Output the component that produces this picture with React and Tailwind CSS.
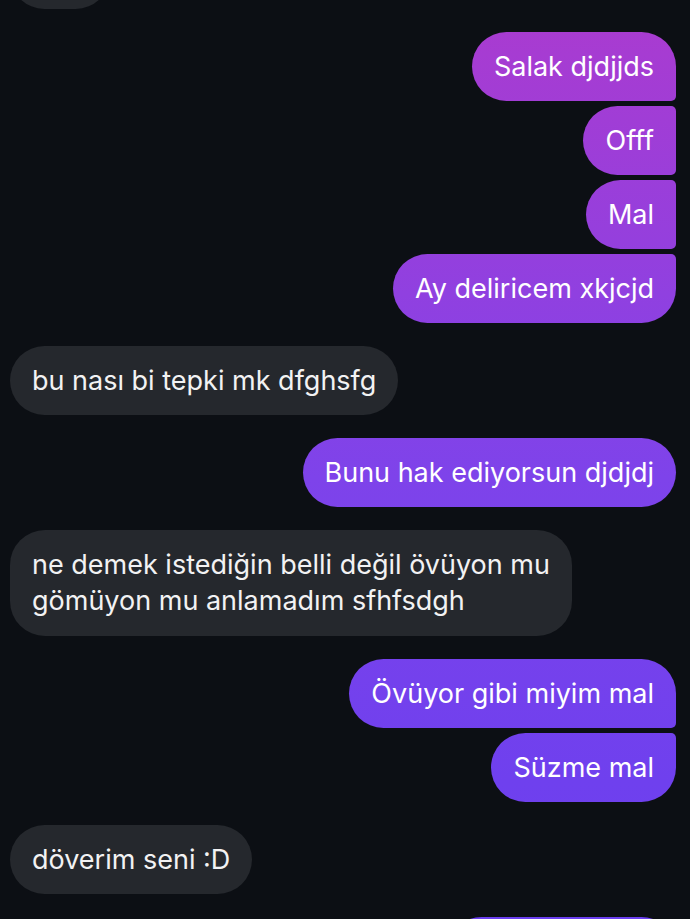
const messages = [
  { id: 0, side: "left", text: "\u00a0", pos: "single", top: true },
  { id: 1, side: "right", text: "Salak djdjjds", pos: "first" },
  { id: 2, side: "right", text: "Offf", pos: "middle" },
  { id: 3, side: "right", text: "Mal", pos: "middle" },
  { id: 4, side: "right", text: "Ay deliricem xkjcjd", pos: "last" },
  { id: 5, side: "left", text: "bu nası bi tepki mk dfghsfg", pos: "single" },
  { id: 6, side: "right", text: "Bunu hak ediyorsun djdjdj", pos: "single" },
  { id: 7, side: "left", lines: ["ne demek istediğin belli değil övüyon mu", "gömüyon mu anlamadım sfhfsdgh"], pos: "single" },
  { id: 8, side: "right", text: "Övüyor gibi miyim mal", pos: "first" },
  { id: 9, side: "right", text: "Süzme mal", pos: "last" },
  { id: 10, side: "left", text: "döverim seni :D", pos: "single" },
  { id: 11, side: "right", text: "\u00a0", pos: "single", bottom: true },
];

const rightCorners = {
  single: "rounded-[35px]",
  first: "rounded-l-[35px] rounded-tr-[35px] rounded-br-[5px]",
  middle: "rounded-l-[35px] rounded-r-[5px]",
  last: "rounded-l-[35px] rounded-tr-[5px] rounded-br-[35px]",
};

const Bubble = ({ msg }) => {
  const isRight = msg.side === "right";
  const content = msg.lines
    ? msg.lines.map((line, i) => (
        <span key={i} className="block whitespace-nowrap leading-[36px]">
          {line}
        </span>
      ))
    : msg.text;

  return (
    <div className={`flex ${isRight ? "justify-end" : "justify-start"} ${msg.top ? "-mt-[60px]" : ""}`}>
      {isRight ? (
        <div
          className={`${rightCorners[msg.pos]} ${msg.bottom ? "w-[229px]" : ""} whitespace-nowrap bg-fixed bg-[linear-gradient(180deg,#ab3bcf_0%,#9040e0_32%,#7e43ea_52%,#6f40ee_85%,#6b3ff0_100%)] px-[22px] py-[17px] text-[27px] leading-[35px] text-white`}
        >
          {content}
        </div>
      ) : (
        <div
          className={`rounded-[35px] bg-[#25282d] px-[22px] py-[17px] text-[27px] leading-[35px] text-[#f2f2f3] ${msg.top ? "w-[100px]" : ""}`}
        >
          {content}
        </div>
      )}
    </div>
  );
};

export default function App() {
  const groupStart = (i) => i > 0 && messages[i].side !== messages[i - 1].side;

  return (
    <div
      className="h-[919px] w-full overflow-hidden bg-[#0c0f14] pl-[10px] pr-[14px]"
      style={{ fontFamily: "Inter, 'Noto Sans', sans-serif" }}
    >
      {messages.map((msg, i) => (
        <div key={msg.id} className={i === 0 ? "" : groupStart(i) ? "mt-[23px]" : "mt-[5px]"}>
          <Bubble msg={msg} />
        </div>
      ))}
    </div>
  );
}
